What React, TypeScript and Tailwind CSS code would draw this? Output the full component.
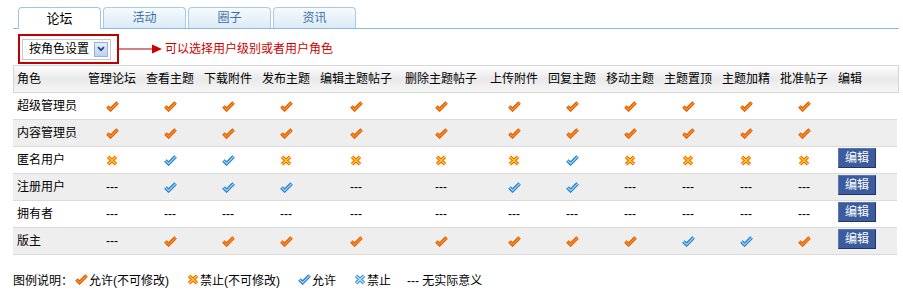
import React from "react";

type Mark = "o" | "x" | "b" | "bx" | "-";

function Icon({ kind }: { kind: Mark }) {
  if (kind === "-") return <span>---</span>;
  if (kind === "o" || kind === "b") {
    const outer = kind === "o" ? "#e25800" : "#1f7dcc";
    const inner = kind === "o" ? "#ff9a22" : "#a9d9f7";
    return (
      <svg width="13" height="11" viewBox="0 0 13 11">
        <path d="M1.4 5.4 L4.6 8.6 L11.6 1.6" fill="none" stroke={outer} strokeWidth="3.5" strokeLinejoin="miter" />
        <path d="M1.4 5.4 L4.6 8.6 L11.6 1.6" fill="none" stroke={inner} strokeWidth="1.3" />
      </svg>
    );
  }
  const outer = kind === "x" ? "#f0600a" : "#2f88d6";
  const inner = kind === "x" ? "#ffd21e" : "#c4e6fb";
  return (
    <svg width="12" height="11" viewBox="0 0 12 11">
      <path d="M2 1.8 L10 9.2 M10 1.8 L2 9.2" fill="none" stroke={outer} strokeWidth="3.4" />
      <path d="M2 1.8 L10 9.2 M10 1.8 L2 9.2" fill="none" stroke={inner} strokeWidth="1.3" />
    </svg>
  );
}

const headers = [
  "管理论坛",
  "查看主题",
  "下载附件",
  "发布主题",
  "编辑主题帖子",
  "删除主题帖子",
  "上传附件",
  "回复主题",
  "移动主题",
  "主题置顶",
  "主题加精",
  "批准帖子",
];

const allO: Mark[] = ["o", "o", "o", "o", "o", "o", "o", "o", "o", "o", "o", "o"];
const allDash: Mark[] = ["-", "-", "-", "-", "-", "-", "-", "-", "-", "-", "-", "-"];

const rows: { name: string; marks: Mark[]; edit: boolean }[] = [
  { name: "超级管理员", marks: allO, edit: false },
  { name: "内容管理员", marks: allO, edit: false },
  { name: "匿名用户", marks: ["x", "b", "b", "x", "x", "x", "x", "b", "x", "x", "x", "x"], edit: true },
  { name: "注册用户", marks: ["-", "b", "b", "b", "-", "-", "b", "b", "-", "-", "-", "-"], edit: true },
  { name: "拥有者", marks: allDash, edit: true },
  { name: "版主", marks: ["-", "o", "o", "o", "o", "o", "o", "o", "o", "b", "b", "o"], edit: true },
];

const tabs = ["论坛", "活动", "圈子", "资讯"];

export default function App() {
  return (
    <div className="w-[903px] h-[294px] bg-white text-[12px] leading-none text-black font-['Liberation_Sans','Noto_Sans_CJK_SC',sans-serif] overflow-hidden">
      <div className="pl-[13px] pr-[4px]">
        {/* Tabs */}
        <div className="flex h-[29px] w-[886px] items-end gap-[2px] border-b border-[#8cb9de] pl-[5px]">
          {tabs.map((t, i) =>
            i === 0 ? (
              <div
                key={t}
                className="-mb-px flex h-[22px] w-[83px] items-center justify-center rounded-t-[4px] border border-b-0 border-[#9fc5e4] bg-white pb-px text-[13px] text-black"
              >
                {t}
              </div>
            ) : (
              <div
                key={t}
                className="flex h-[21px] w-[83px] items-center justify-center rounded-t-[4px] border border-b-0 border-[#a7cbe7] bg-gradient-to-b from-[#f6fafd] to-[#dcebf7] text-[12px] text-[#3b6fa8]"
              >
                {t}
              </div>
            )
          )}
        </div>

        {/* Role selector */}
        <div className="mt-[5px] ml-[5px] flex items-center">
          <div className="flex h-[30px] w-[101px] items-center border-2 border-[#c00000] pl-[2px]">
            <div className="flex h-[21px] w-[89px] items-center border border-[#c8c8c8] pl-[6px]">
              <span>按角色设置</span>
              <div className="ml-[5px] flex h-[15px] w-[14px] items-center justify-center border border-[#93b1da] bg-gradient-to-b from-[#e4eefb] to-[#bcd3f1]">
                <svg width="8" height="6" viewBox="0 0 8 6">
                  <path d="M1 1.2 L4 4.2 L7 1.2" fill="none" stroke="#27477f" strokeWidth="1.8" />
                </svg>
              </div>
            </div>
          </div>
          <svg width="44" height="12" viewBox="0 0 44 12" className="-mt-[1px]">
            <line x1="0" y1="6" x2="34" y2="6" stroke="#b00000" strokeWidth="1" />
            <path d="M33 1.5 L43 6 L33 10.5 Z" fill="#cc0000" />
          </svg>
          <span className="ml-[2px] text-[#cc0000]">可以选择用户级别或者用户角色</span>
        </div>

        {/* Table header */}
        <div className="mt-[1px] grid h-[28px] w-[886px] grid-cols-[69px_58px_58px_58px_58px_82px_88px_58px_58px_58px_58px_58px_58px_64px] items-center border border-[#d6d6d6] bg-gradient-to-b from-[#fdfdfd] via-[#e9e9e9] to-[#f7f7f7]">
          <div className="pl-[3px]">角色</div>
          {headers.map((h) => (
            <div key={h} className="text-center whitespace-nowrap">
              {h}
            </div>
          ))}
          <div className="pl-[5px]">编辑</div>
        </div>

        {/* Rows */}
        {rows.map((r, i) => (
          <div
            key={r.name}
            className={`grid h-[27px] w-[884px] grid-cols-[70px_58px_58px_58px_58px_82px_88px_58px_58px_58px_58px_58px_58px_64px] items-center border-b border-[#dadada] ${
              i % 2 === 1 ? "bg-[#eeeeee]" : "bg-white"
            }`}
          >
            <div className="pl-[4px] whitespace-nowrap">{r.name}</div>
            {r.marks.map((m, j) => (
              <div key={j} className="flex items-center justify-center">
                <Icon kind={m} />
              </div>
            ))}
            <div className="pl-[5px]">
              {r.edit && (
                <div className="-mt-[5px] flex h-[20px] w-[38px] items-center justify-center border border-[#1f356c] border-t-[#5a78b4] border-l-[#5a78b4] bg-[#3c5c9e] text-white">
                  编辑
                </div>
              )}
            </div>
          </div>
        ))}

        {/* Legend */}
        <div className="mt-[16px] flex h-[20px] items-center whitespace-nowrap">
          <span>图例说明：</span>
          <span className="ml-[2px] mb-[4px] flex">
            <Icon kind="o" />
          </span>
          <span className="ml-[1px]">允许(不可修改)</span>
          <span className="ml-[18px] mb-[4px] flex">
            <Icon kind="x" />
          </span>
          <span className="ml-[1px]">禁止(不可修改)</span>
          <span className="ml-[18px] mb-[4px] flex">
            <Icon kind="b" />
          </span>
          <span className="ml-[1px]">允许</span>
          <span className="ml-[18px] mb-[4px] flex">
            <Icon kind="bx" />
          </span>
          <span className="ml-[1px]">禁止</span>
          <span className="ml-[16px]">--- 无实际意义</span>
        </div>
      </div>
    </div>
  );
}
